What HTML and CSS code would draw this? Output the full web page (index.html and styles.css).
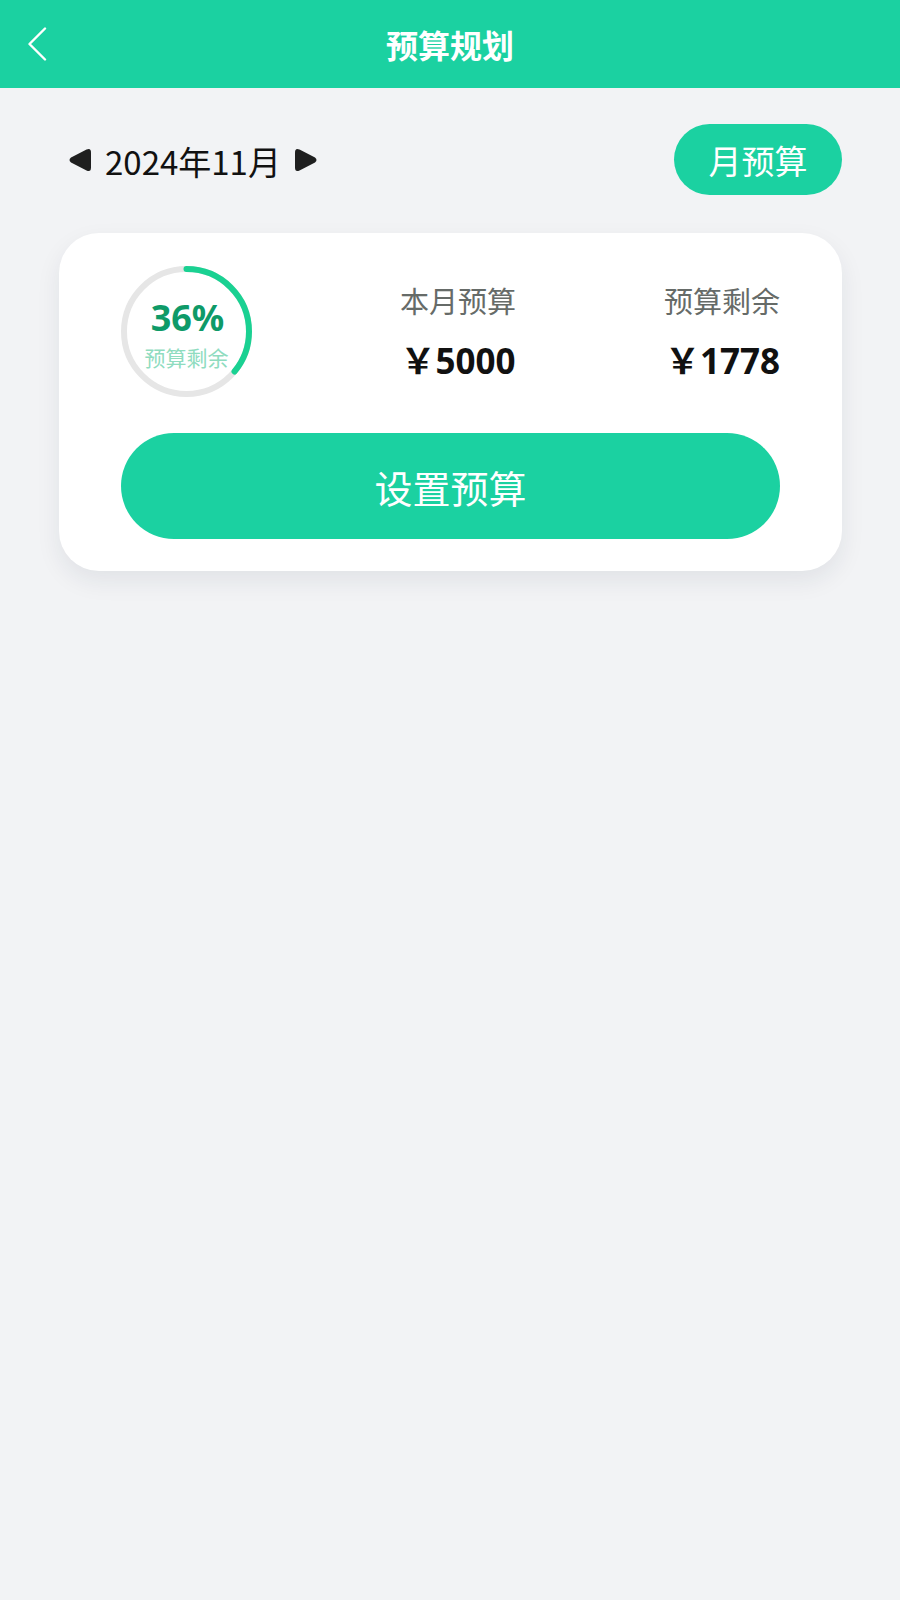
FILE: index.html
```html
<!DOCTYPE html>
<html lang="zh-CN">
<head>
<meta charset="utf-8">
<title>预算规划</title>
<link rel="stylesheet" href="styles.css">
</head>
<body>
<header class="topbar">
  <button class="back" aria-label="返回">
    <svg width="20" height="34" viewBox="0 0 20 34"><path d="M18 1.5 L2.5 17 L18 32.5" fill="none" stroke="#fff" stroke-width="2.4" stroke-linecap="round" stroke-linejoin="round"/></svg>
  </button>
  <h1 class="title">预算规划</h1>
  <span></span>
</header>
<main class="content">
  <div class="period-row">
    <div class="period">
      <svg class="tri" width="24" height="24" viewBox="0 0 24 24"><path d="M18.5 1.5 Q23 -0.5 23 4.5 L23 19.5 Q23 24.5 18.5 22.5 L3 14.6 Q0 12 3 9.4 Z" fill="#1f1f1f"/></svg>
      <span class="period-text">2024年11月</span>
      <svg class="tri" width="24" height="24" viewBox="0 0 24 24"><path d="M5.5 1.5 Q1 -0.5 1 4.5 L1 19.5 Q1 24.5 5.5 22.5 L21 14.6 Q24 12 21 9.4 Z" fill="#1f1f1f"/></svg>
    </div>
    <button class="mode-btn">月预算</button>
  </div>
  <section class="card">
    <div class="summary">
      <div class="ring">
        <svg width="131" height="131" viewBox="0 0 131 131">
          <circle cx="65.5" cy="65.5" r="62.5" fill="none" stroke="#e6e6e6" stroke-width="6"/>
          <circle cx="65.5" cy="65.5" r="62.5" fill="none" stroke="#1ad192" stroke-width="6" stroke-linecap="round" stroke-dasharray="141.4 400" transform="rotate(-90 65.5 65.5)"/>
        </svg>
        <div class="ring-text">
          <span class="pct">36%</span>
          <span class="ring-label">预算剩余</span>
        </div>
      </div>
      <div class="stat stat-mid">
        <span class="stat-label">本月预算</span>
        <span class="stat-value">￥5000</span>
      </div>
      <div class="stat stat-right">
        <span class="stat-label">预算剩余</span>
        <span class="stat-value">￥1778</span>
      </div>
    </div>
    <button class="set-btn">设置预算</button>
  </section>
</main>
</body>
</html>
```
FILE: styles.css
```css
* { box-sizing: border-box; }
html, body { margin: 0; padding: 0; }
body {
  background: #f2f3f5;
  font-family: "Noto Sans", "Noto Sans CJK SC", sans-serif;
  min-height: 1600px;
}
button { font-family: inherit; border: none; cursor: pointer; }

.topbar {
  height: 88px;
  background: #1bd1a1;
  display: grid;
  grid-template-columns: 1fr auto 1fr;
  align-items: center;
}
.back {
  background: none;
  padding: 0;
  margin-left: 27px;
  width: 20px;
  height: 34px;
  justify-self: start;
  display: flex;
}
.title {
  margin: 0;
  color: #fff;
  font-size: 32px;
  font-weight: 700;
  font-family: "Noto Sans CJK SC", sans-serif;
}

.content {
  padding: 36px 58px 0 59px;
}
.period-row {
  display: flex;
  align-items: center;
  justify-content: space-between;
}
.period {
  display: flex;
  align-items: center;
  gap: 13px;
  margin-left: 9px;
}
.period-text {
  font-family: "Noto Sans CJK SC", sans-serif;
  font-size: 33px;
  color: #111;
  margin-top: 2px;
}
.mode-btn {
  width: 168px;
  height: 71px;
  border-radius: 36px;
  background: #1bd1a1;
  color: #fff;
  font-size: 33px;
  font-family: "Noto Sans CJK SC", sans-serif;
  padding: 0;
}

.card {
  margin-top: 38px;
  background: #fff;
  border-radius: 40px;
  padding: 33px 62px 32px;
  box-shadow: 0 10px 24px rgba(20, 40, 70, 0.08);
}
.summary {
  display: grid;
  grid-template-columns: 131px 1fr auto;
  align-items: center;
}
.ring {
  display: grid;
  width: 131px;
  height: 131px;
}
.ring > * { grid-area: 1 / 1; }
.ring-text {
  display: flex;
  flex-direction: column;
  align-items: center;
  justify-content: center;
  padding-top: 6px;
}
.pct {
  font-size: 36px;
  font-weight: 700;
  color: #0e9a68;
  line-height: 36px;
  margin-left: 2px;
}
.ring-label {
  font-family: "Noto Sans CJK SC", sans-serif;
  font-size: 21px;
  color: #8fdcbf;
  line-height: 26px;
  margin-top: 8px;
}
.stat {
  display: flex;
  flex-direction: column;
  gap: 18px;
  padding-top: 0;
}
.stat-mid { align-items: center; }
.stat-right { align-items: flex-end; }
.stat-label {
  font-family: "Noto Sans CJK SC", sans-serif;
  font-size: 29px;
  color: #666b68;
  line-height: 40px;
}
.stat-value {
  font-size: 35px;
  font-weight: 700;
  color: #111;
  line-height: 46px;
}
.set-btn {
  display: block;
  width: 100%;
  height: 106px;
  margin-top: 36px;
  border-radius: 53px;
  background: #1bd1a1;
  color: #fff;
  font-size: 38px;
  font-family: "Noto Sans CJK SC", sans-serif;
}
```
